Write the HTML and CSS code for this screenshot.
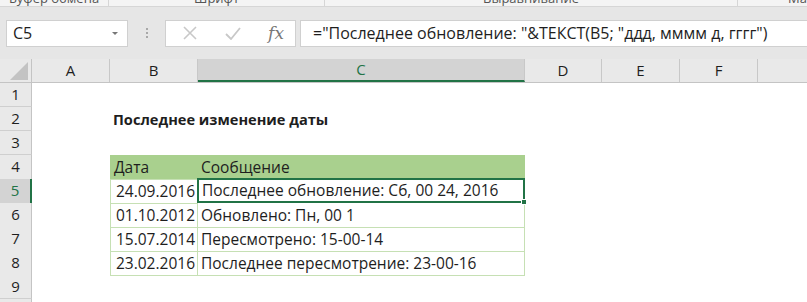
FILE: index.html
```html
<!DOCTYPE html>
<html lang="ru">
<head>
  <meta charset="UTF-8" />
  <title>Последнее изменение даты</title>
  <link rel="stylesheet" href="styles.css">
</head>
<body>

  <!-- обрезанная лента сверху -->
  <div class="ribbon">
    <div class="group g1"><span>Буфер обмена</span></div>
    <div class="group g2"><span>Шрифт</span></div>
    <div class="group g3"><span>Выравнивание</span></div>
    <div class="group g4"><span>Ма</span></div>
  </div>

  <div class="formula-bar">
    <div class="name-box">
      <span>C5</span>
      <span class="caret"></span>
    </div>
    <div class="grip"><i></i><i></i><i></i></div>
    <div class="fx-buttons">
      <svg class="btn-x" width="14" height="14" viewBox="0 0 14 14">
        <path d="M1 1 L13 13 M13 1 L1 13" stroke="#c8c8c8" stroke-width="1.6" fill="none" />
      </svg>
      <svg class="btn-ok" width="16" height="13" viewBox="0 0 16 13">
        <path d="M1 7 L6 12 L15 1" stroke="#c8c8c8" stroke-width="1.8" fill="none" />
      </svg>
      <span class="fx">fx</span>
    </div>
    <div class="formula">="Последнее обновление: "&amp;ТЕКСТ(B5; "ддд, мммм д, гггг")</div>
  </div>

  <div class="sheet">
    <div class="row col-heads">
      <div class="corner"><span class="tri"></span></div>
      <div class="ch">A</div>
      <div class="ch">B</div>
      <div class="ch active">C</div>
      <div class="ch">D</div>
      <div class="ch">E</div>
      <div class="ch">F</div>
      <div class="ch last"></div>
    </div>

    <div class="row"><div class="rh">1</div></div>
    <div class="row">
      <div class="rh">2</div>
      <div class="cell title">Последнее изменение даты</div>
    </div>
    <div class="row"><div class="rh">3</div></div>
    <div class="row">
      <div class="rh">4</div>
      <div class="cell tb thead b-col">Дата</div>
      <div class="cell tb thead c-col">Сообщение</div>
    </div>
    <div class="row">
      <div class="rh active">5</div>
      <div class="cell tb b-col num">24.09.2016</div>
      <div class="cell tb c-col selected">Последнее обновление: Сб, 00 24, 2016<span class="handle"></span></div>
    </div>
    <div class="row">
      <div class="rh">6</div>
      <div class="cell tb b-col num">01.10.2012</div>
      <div class="cell tb c-col">Обновлено: Пн, 00 1</div>
    </div>
    <div class="row">
      <div class="rh">7</div>
      <div class="cell tb b-col num">15.07.2014</div>
      <div class="cell tb c-col">Пересмотрено: 15-00-14</div>
    </div>
    <div class="row">
      <div class="rh">8</div>
      <div class="cell tb b-col num">23.02.2016</div>
      <div class="cell tb c-col">Последнее пересмотрение: 23-00-16</div>
    </div>
    <div class="row"><div class="rh">9</div></div>
    <div class="row stub"><div class="rh"></div></div>
  </div>

</body>
</html>
```

FILE: styles.css
```css
body {
  margin: 0;
  width: 807px;
  height: 302px;
  overflow: hidden;
  font-family: 'Open Sans', 'Liberation Sans', sans-serif;
  color: #1e1e1e;
  background: #fff;
}

/* лента */
.ribbon {
  display: flex;
  height: 6px;
  background: #f4f4f4;
  border-bottom: 1px solid #d6d6d6;
  overflow: hidden;
}

.group {
  border-right: 1px solid #d6d6d6;
  text-align: center;
  font-size: 13px;
  line-height: 13px;
  color: #555;
}

.group span {
  display: block;
  margin-top: -8px;
}

.g1 { width: 108px; }
.g2 { width: 215px; }
.g3 { width: 412px; }
.g4 { flex: 1; border-right: none; text-align: left; padding-left: 50px; }

/* строка формул */
.formula-bar {
  display: flex;
  align-items: center;
  height: 52px;
  padding-left: 6px;
  background: #e6e6e6;
}

.name-box,
.fx-buttons,
.formula {
  height: 27px;
  box-sizing: border-box;
  background: #fff;
  border: 1px solid #d0d0d0;
  display: flex;
  align-items: center;
}

.name-box {
  width: 122px;
  padding: 0 9px 0 6px;
  justify-content: space-between;
  font-size: 16px;
}

.caret {
  width: 0;
  height: 0;
  border-left: 3px solid transparent;
  border-right: 3px solid transparent;
  border-top: 3px solid #777;
}

.grip {
  width: 37px;
  display: flex;
  flex-direction: column;
  align-items: center;
  gap: 2px;
}

.grip i {
  width: 2px;
  height: 2px;
  background: #a8a8a8;
}

.fx-buttons {
  width: 131px;
  padding: 0 11px 0 17px;
  justify-content: space-between;
}

.fx {
  font-family: 'DejaVu Serif', 'Liberation Serif', serif;
  font-style: italic;
  font-size: 17px;
  color: #777;
}

.formula {
  flex: 1;
  margin-left: 4px;
  border-right: none;
  padding-left: 12px;
  font-size: 16px;
  white-space: nowrap;
}

/* лист */
.row {
  display: grid;
  grid-template-columns: 32px 78px 88px 327px 77px 78px 78px 1fr;
  height: 24px;
}

.row.stub {
  height: 4px;
  overflow: hidden;
}

.col-heads {
  height: 23px;
  background: #e9e9e9;
  border-bottom: 1px solid #c4c4c4;
}

.corner {
  position: relative;
  border-right: 1px solid #c4c4c4;
}

.tri {
  position: absolute;
  right: 3px;
  bottom: 2px;
  width: 0;
  height: 0;
  border-left: 18px solid transparent;
  border-bottom: 18px solid #c3c3c3;
}

.ch {
  border-right: 1px solid #c8c8c8;
  text-align: center;
  font-size: 15px;
  line-height: 23px;
}

.ch.last {
  border-right: none;
}

.ch.active {
  background: #d3d3d3;
  color: #217346;
  border-bottom: 2px solid #217346;
  line-height: 21px;
}

.rh {
  grid-column: 1;
  background: #e9e9e9;
  border-right: 1px solid #c4c4c4;
  border-bottom: 1px solid #cfcfcf;
  box-sizing: border-box;
  text-align: center;
  font-size: 15px;
  line-height: 23px;
}

.rh.active {
  background: #d3d3d3;
  color: #217346;
  border-right: 2px solid #217346;
}

.cell {
  font-size: 15.5px;
  line-height: 24px;
  padding-left: 3px;
  white-space: nowrap;
  box-sizing: border-box;
}

.title {
  grid-column: 3 / 5;
  font-weight: bold;
  font-size: 14.6px;
}

.b-col { grid-column: 3; }
.c-col { grid-column: 4; }

.tb {
  border-bottom: 1px solid #c6e0b4;
}

.b-col.tb {
  border-left: 1px solid #c6e0b4;
  border-right: 1px solid #c6e0b4;
}

.c-col.tb {
  border-right: 1px solid #c6e0b4;
}

.thead {
  background: #a9d08e;
  border-left-color: #a9d08e !important;
  border-right-color: #a9d08e !important;
}

.num {
  text-align: right;
  padding-right: 2px;
}

.selected {
  position: relative;
  border: 2px solid #217346 !important;
  margin-left: -1px;
  margin-top: -1px;
  height: 25px;
  line-height: 21px;
}

.handle {
  position: absolute;
  right: -4px;
  bottom: -4px;
  width: 6px;
  height: 6px;
  background: #217346;
  border: 1px solid #fff;
  box-sizing: border-box;
}
```
